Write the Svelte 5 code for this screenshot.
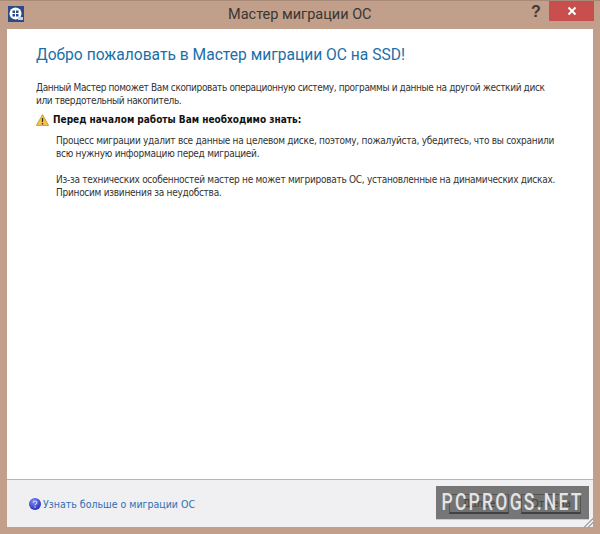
<script>
	const notes = [
		"Процесс миграции удалит все данные на целевом диске, поэтому, пожалуйста, убедитесь, что вы сохранили всю нужную информацию перед миграцией.",
		"Из-за технических особенностей мастер не может мигрировать ОС, установленные на динамических дисках. Приносим извинения за неудобства.",
	]
</script>

<div class="window">
	<header class="titlebar">
		<svg class="app-icon" width="16" height="16" viewBox="0 0 16 16">
			<rect width="16" height="16" fill="#2b4a86" />
			<circle cx="7.5" cy="7.5" r="6" fill="#fff" />
			<path d="M4.5 4.5h2.5V7H4.5zM8 4.5h2.5V7H8zM4.5 8H7v2.5H4.5zM8 8h2.5v2.5H8z" fill="#2b4a86" />
			<rect x="10" y="11" width="5" height="3" fill="#c6d2e6" />
		</svg>
		<span class="title">Мастер миграции ОС</span>
		<span class="help">?</span>
		<button class="close" aria-label="Закрыть">
			<svg width="10" height="10" viewBox="0 0 10 10">
				<path d="M1.5 1.5l7 7M8.5 1.5l-7 7" stroke="#fff" stroke-width="2" />
			</svg>
		</button>
	</header>

	<main class="content">
		<h1>Добро пожаловать в Мастер миграции ОС на SSD!</h1>
		<p class="intro">
			Данный Мастер поможет Вам скопировать операционную систему, программы и данные на другой жесткий диск
			или твердотельный накопитель.
		</p>
		<div class="warning">
			<svg width="13" height="12" viewBox="0 0 13 12">
				<path d="M6.5.6L12.6 11.4H.4z" fill="#f6c445" stroke="#c98f1c" stroke-width=".8" />
				<path d="M6.5 4v4M6.5 9v1.4" stroke="#333" stroke-width="1.3" />
			</svg>
			<strong>Перед началом работы Вам необходимо знать:</strong>
		</div>
		<div class="notes">
			{#each notes as note}
				<p>{note}</p>
			{/each}
		</div>
	</main>

	<footer class="footer">
		<a class="more" href="#more">
			<svg width="12" height="12" viewBox="0 0 12 12">
				<defs>
					<radialGradient id="ball" cx="40%" cy="30%" r="75%">
						<stop offset="0" stop-color="#7f8ff0" />
						<stop offset="1" stop-color="#2626b8" />
					</radialGradient>
				</defs>
				<circle cx="6" cy="6" r="6" fill="url(#ball)" />
				<path d="M4.3 4.7c0-2.2 3.6-2.2 3.6-.2 0 1.3-1.9 1.4-1.9 2.8M6 8.3v1.4" fill="none" stroke="#d5dcff" stroke-width="1.1" />
			</svg>
			Узнать больше о миграции ОС
		</a>
		<div class="actions">
			<button>Далее</button>
			<button>Отмена</button>
		</div>
	</footer>

	<div class="watermark"><span>PCPROGS.NET</span></div>
	<div class="grip"></div>
</div>

<style>
	:global(body) {
		margin: 0;
		background: #bd9b87;
	}

	.window {
		position: relative;
		width: 600px;
		height: 534px;
		box-sizing: border-box;
		padding: 0 7px 7px;
		display: flex;
		flex-direction: column;
		background: #c19f8b;
		border-top: 1px solid #a98a78;
		font-family: "DejaVu Sans Condensed", "DejaVu Sans", sans-serif;
		font-stretch: condensed;
		color: #333;
		overflow: hidden;
	}

	.titlebar {
		height: 28px;
		flex: none;
		display: flex;
		align-items: flex-start;
		position: relative;
	}

	.app-icon {
		margin: 5px 0 0 1px;
	}

	.title {
		position: absolute;
		left: 221px;
		top: 4px;
		font-family: "Roboto", sans-serif;
		font-stretch: normal;
		font-size: 14.5px;
		line-height: 20px;
		color: #3a3632;
	}

	.help {
		position: absolute;
		left: 524px;
		top: 1px;
		font: bold 16px/20px "Liberation Sans", sans-serif;
		color: #3b3b3b;
	}

	.close {
		position: absolute;
		right: -1px;
		top: 0;
		width: 45px;
		height: 20px;
		border: 0;
		padding: 0;
		background: #c94f4f;
		display: flex;
		align-items: center;
		justify-content: center;
	}

	.content {
		flex: 1;
		background: #fff;
		padding: 0 29px;
		min-height: 0;
	}

	h1 {
		margin: 15px 0 0;
		font-family: "Roboto", sans-serif;
		font-stretch: normal;
		font-weight: 400;
		font-size: 15.6px;
		line-height: 22px;
		color: #1a6fa8;
	}

	p {
		margin: 0;
	}

	.intro {
		margin-top: 15px;
		font-size: 10px;
		line-height: 13px;
		letter-spacing: -0.37px;
		width: 525px;
	}

	.warning {
		margin-top: 6px;
		display: flex;
		align-items: center;
		gap: 4px;
		font-size: 10px;
		line-height: 13px;
		color: #111;
	}

	.notes {
		margin: 8px 0 0 20px;
		width: 505px;
		font-size: 10px;
		line-height: 13px;
		letter-spacing: -0.27px;
	}

	.notes p + p {
		margin-top: 13px;
	}

	.footer {
		height: 48px;
		flex: none;
		box-sizing: border-box;
		border-top: 1px solid #b5b5b5;
		background: #f0f0f2;
		padding: 0 12px 0 22px;
		display: flex;
		align-items: center;
		justify-content: space-between;
		font-size: 10.5px;
	}

	.more {
		display: flex;
		align-items: center;
		gap: 2px;
		color: #2f6fb5;
		text-decoration: none;
	}

	.actions {
		display: flex;
		gap: 12px;
	}

	.actions button {
		width: 60px;
		height: 20px;
		padding: 0;
		border: 1px solid #777;
		border-bottom: 2px solid #333;
		background: #e6e6e6;
		font: 10px "DejaVu Sans", sans-serif;
		color: #333;
	}

	.watermark {
		position: absolute;
		left: 436px;
		top: 485px;
		width: 153px;
		height: 33px;
		background: rgba(70, 70, 70, 0.72);
		box-shadow: 0 1px 0 rgba(120, 120, 120, 0.3);
		color: #e4e4e4;
		font: 500 23px/33px "Roboto", sans-serif;
		letter-spacing: 3px;
		text-align: center;
		white-space: nowrap;
		display: flex;
		justify-content: center;
	}

	.watermark span {
		transform: scaleX(0.76);
	}

	.grip {
		position: absolute;
		right: 7px;
		bottom: 7px;
		width: 10px;
		height: 10px;
		background: repeating-linear-gradient(135deg, transparent 0 1.5px, #aaa 1.5px 3px);
		clip-path: polygon(100% 0, 100% 100%, 0 100%);
	}
</style>
